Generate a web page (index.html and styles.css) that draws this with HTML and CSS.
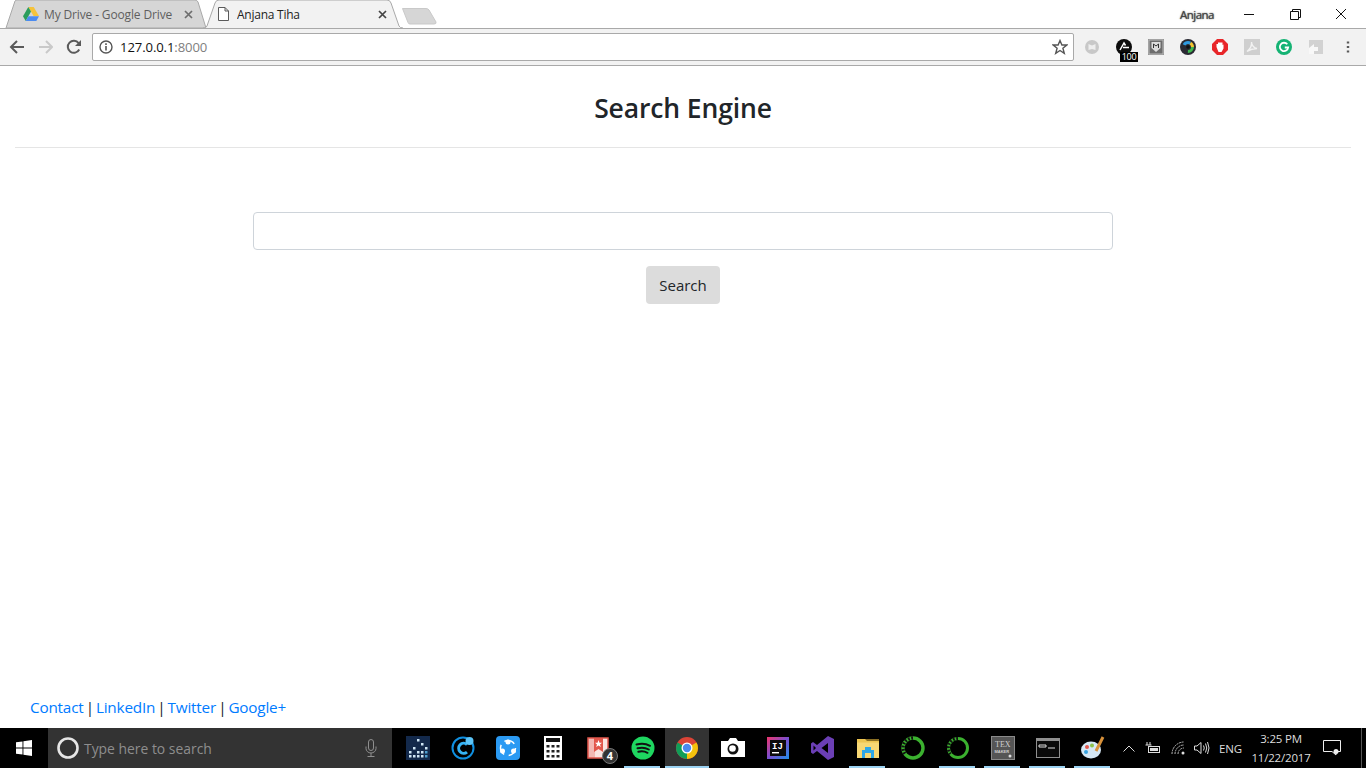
FILE: index.html
```
<!DOCTYPE html>
<html lang="en">
<head>
<meta charset="utf-8">
<title>Anjana Tiha</title>
<link rel="stylesheet" href="styles.css">
</head>
<body>
<header class="browser">
  <div class="tabstrip">
    <div class="tab tab-inactive">
      <svg class="tab-shape" viewBox="0 0 200 28"><path d="M0 28 L9 1 Q9.500 0 11 0 H189 Q191 0 192 2 L200 28Z" fill="#d6d6d6" stroke="#a9a9a9"/></svg>
      <svg class="tab-icon" viewBox="0 0 16 14"><path d="M5.300 0H10.700L16 9H10.600Z" fill="#f5c33b"/><path d="M5.300 0L8 4.600 2.700 14 0 9.300Z" fill="#2a9d5c"/><path d="M5.400 9.300H16L13.300 14H2.700Z" fill="#4b8bf0"/></svg>
      <span class="tab-title tab-title-dim">My Drive - Google Drive</span>
      <svg class="tab-close" viewBox="0 0 9 9"><path d="M1 1L8 8M8 1L1 8" stroke="#6d6d6d" stroke-width="1.700"/></svg>
    </div>
    <div class="tab tab-active">
      <svg class="tab-shape" viewBox="0 0 200 28"><path d="M0 28 H1 Q3 28 4 26 L12 3 Q13 0 16 0 H184 Q187 0 188 3 L196 26 Q197 28 200 28" fill="#f2f2f2" stroke="#a9a9a9"/></svg>
      <svg class="tab-icon tab-icon-doc" viewBox="0 0 11 14"><path d="M.5.500H7L10.500 4V13.500H.5ZM7 .5V4H10.500" fill="#fff" stroke="#5a5a5a"/></svg>
      <span class="tab-title tab-title-tight">Anjana Tiha</span>
      <svg class="tab-close" viewBox="0 0 9 9"><path d="M1 1L8 8M8 1L1 8" stroke="#444" stroke-width="1.700"/></svg>
    </div>
    <svg class="new-tab" viewBox="0 0 36 18"><path d="M1.500 1.500 H25 Q27 1.500 28 3 L35 15 Q35.500 17 33 17 H9 Q7.500 17 7 15.500Z" fill="#d6d6d6" stroke="#c9c9c9"/></svg>
    <span class="user-name">Anjana</span>
    <div class="window-controls">
      <svg class="win-btn" viewBox="0 0 46 28"><path d="M18 14.500H28" stroke="#111"/></svg>
      <svg class="win-btn" viewBox="0 0 46 28"><path d="M18.500 11.500H26.500V19.500H18.500ZM20.500 11.500V9.500H28.500V17.500H26.500" fill="none" stroke="#111"/></svg>
      <svg class="win-btn" viewBox="0 0 46 28"><path d="M18 9L28 19M28 9L18 19" stroke="#111"/></svg>
    </div>
  </div>
  <div class="toolbar">
    <svg class="nav-icon" viewBox="0 0 16 16"><path d="M15 8H2M8 2L2 8L8 14" fill="none" stroke="#5a5a5a" stroke-width="2"/></svg>
    <svg class="nav-icon" viewBox="0 0 16 16"><path d="M2 8H15M9 2L15 8L9 14" fill="none" stroke="#c9c9c9" stroke-width="2"/></svg>
    <svg class="nav-icon" viewBox="0 0 16 16"><path d="M14.200 10.500A6 6 0 1 1 13.600 4.200" fill="none" stroke="#5a5a5a" stroke-width="2"/><path d="M16 1V7H10Z" fill="#5a5a5a"/></svg>
    <div class="omnibox">
      <svg class="info-icon" viewBox="0 0 14 14"><circle cx="7" cy="7" r="6" fill="none" stroke="#555" stroke-width="1.400"/><path d="M7 6V10.500M7 3.200V5" stroke="#555" stroke-width="1.600"/></svg>
      <span class="url">127.0.0.1<span class="url-port">:8000</span></span>
      <svg class="star-icon" viewBox="0 0 16 16"><path d="M8 1.500L9.900 6H14.800L10.900 9.200L12.300 14.300L8 11.500L3.700 14.300L5.100 9.200L1.200 6H6.100Z" fill="none" stroke="#555" stroke-width="1.400"/></svg>
    </div>
    <div class="extensions">
      <span class="ext"><svg viewBox="0 0 16 16"><circle cx="8" cy="8" r="7" fill="#c8c8c8"/><path d="M4.500 5L8 6.500L11.500 5V11L8 10L4.500 11Z" fill="#eee"/></svg></span>
      <span class="ext"><svg viewBox="0 0 16 16"><circle cx="8" cy="8" r="8" fill="#0c0c0c"/><path d="M4 11L8 4L9.500 6.500M7 8.500H13" fill="none" stroke="#fff" stroke-width="1.500"/></svg><span class="ext-badge">100</span></span>
      <span class="ext"><svg viewBox="0 0 16 16"><rect width="16" height="16" fill="#8a8a8a"/><rect x="1" y="1" width="14" height="14" fill="#6d6d6d" stroke="#bbb"/><path d="M3.500 3H12.500V9L8 13L3.500 9Z" fill="#ddd"/><path d="M5.500 9V5L8 7L10.500 5V9" fill="none" stroke="#333"/></svg></span>
      <span class="ext"><svg viewBox="0 0 16 16"><circle cx="8" cy="8" r="8" fill="#2a2a33"/><circle cx="8" cy="8" r="4.500" fill="none" stroke="#3fb950" stroke-width="3" stroke-dasharray="7 30"/><circle cx="8" cy="8" r="4.500" fill="none" stroke="#e53aa8" stroke-width="3" stroke-dasharray="7 30" stroke-dashoffset="7"/><circle cx="8" cy="8" r="4.500" fill="none" stroke="#f2c230" stroke-width="3" stroke-dasharray="7 30" stroke-dashoffset="14"/><circle cx="8" cy="8" r="4.500" fill="none" stroke="#2f9ae0" stroke-width="3" stroke-dasharray="7 30" stroke-dashoffset="21"/><circle cx="8" cy="8" r="1.800" fill="#111"/></svg></span>
      <span class="ext"><svg viewBox="0 0 16 16"><path d="M5 0H11L16 5V11L11 16H5L0 11V5Z" fill="#e8262a"/><path d="M4.500 8V5H6V3.500H10.500V6L11.500 5.500V9.500L9.500 13H6.500Z" fill="#fff"/></svg></span>
      <span class="ext"><svg viewBox="0 0 16 16"><rect width="16" height="16" fill="#cfcfcf"/><path d="M3 12.500C6 10 8 6 7.500 3C7.500 6 10 9 13 9.500C9.500 9.500 6 10.500 3 12.500Z" fill="none" stroke="#f2f2f2" stroke-width="1.400"/></svg></span>
      <span class="ext"><svg viewBox="0 0 16 16"><circle cx="8" cy="8" r="8" fill="#15b374"/><path d="M11.300 5.300A4.200 4.200 0 1 0 12.200 8.500H8.800" fill="none" stroke="#fff" stroke-width="1.800"/></svg></span>
      <span class="ext"><svg viewBox="0 0 16 16"><path d="M1 1H15V15H1Z" fill="#d2d2d2"/><path d="M1 9L6 5V8H10V12H6V15H1Z" fill="#f8f8f8"/></svg></span>
      <span class="ext"><svg viewBox="0 0 16 16"><path d="M8 2.500V4.500M8 7V9M8 11.500V13.500" stroke="#5a5a5a" stroke-width="2.400"/></svg></span>
    </div>
  </div>
</header>

<main class="page">
  <h1 class="title">Search Engine</h1>
  <hr class="rule">
  <form class="search-form">
    <input class="search-input" type="text" aria-label="Search">
    <button class="search-button" type="button">Search</button>
  </form>
  <footer class="footer">
    <a href="#">Contact</a> | <a href="#">LinkedIn</a> | <a href="#">Twitter</a> | <a href="#">Google+</a>
  </footer>
</main>

<nav class="taskbar">
  <span class="start"><svg viewBox="0 0 16 16"><path d="M0 2.300L6.500 1.400V7.500H0ZM7.400 1.300L16 0V7.500H7.400ZM0 8.500H6.500V14.600L0 13.700ZM7.400 8.500H16V16L7.400 14.700Z" fill="#fff"/></svg></span>
  <div class="cortana">
    <svg class="cortana-ring" viewBox="0 0 22 22"><circle cx="11" cy="11" r="9.500" fill="none" stroke="#e6e6e6" stroke-width="2.600"/></svg>
    <span class="cortana-text">Type here to search</span>
    <svg class="mic" viewBox="0 0 12 18"><rect x="3.500" y=".5" width="5" height="11" rx="2.500" fill="none" stroke="#8f8f8f"/><path d="M1 7.500V9.500A5 4.500 0 0 0 11 9.500V7.500M6 14V17M2.500 17.500H9.500" fill="none" stroke="#8f8f8f"/></svg>
  </div>
  <div class="apps">
    <span class="app"><svg viewBox="0 0 24 24"><rect width="24" height="24" fill="#13294b"/><g fill="#cfe6f5"><rect x="11" y="3" width="2.500" height="2.500"/><rect x="15" y="7" width="2.500" height="2.500"/><rect x="7" y="11" width="2.500" height="2.500"/><rect x="19" y="11" width="2.500" height="2.500"/><rect x="3" y="15" width="2.500" height="2.500"/><rect x="11" y="15" width="2.500" height="2.500"/><rect x="15" y="15" width="2.500" height="2.500"/><rect x="3" y="19" width="2.500" height="2.500"/><rect x="7" y="19" width="2.500" height="2.500"/><rect x="11" y="19" width="2.500" height="2.500"/><rect x="15" y="19" width="2.500" height="2.500"/></g><rect x="19" y="19" width="2.500" height="2.500" fill="#4f9fd0"/><rect x="19" y="15" width="2.500" height="2.500" fill="#4f9fd0"/></svg></span>
    <span class="app"><svg viewBox="0 0 24 24"><circle cx="12" cy="12" r="10.500" fill="none" stroke="#0f8fe0" stroke-width="2"/><path d="M16 8.500A5 5 0 1 0 16 16" fill="none" stroke="#35b3f5" stroke-width="3"/><circle cx="18.500" cy="5" r="4" fill="#5cc4f7"/></svg></span>
    <span class="app"><svg viewBox="0 0 24 24"><rect width="24" height="24" rx="4" fill="#2b9af3"/><circle cx="12" cy="12" r="7.500" fill="none" stroke="#fff" stroke-width="1.500" stroke-dasharray="11 4.700"/><circle cx="12" cy="6" r="2.500" fill="#fff"/><circle cx="6.500" cy="15" r="2.500" fill="#fff"/><circle cx="17.500" cy="15" r="2.500" fill="#fff"/></svg></span>
    <span class="app"><svg viewBox="0 0 24 24"><rect x="3" width="18" height="24" fill="#fff"/><rect x="5" y="2" width="14" height="4" fill="#111"/><g fill="#222"><rect x="5.500" y="9" width="3" height="2.500"/><rect x="10.500" y="9" width="3" height="2.500"/><rect x="15.500" y="9" width="3" height="2.500"/><rect x="5.500" y="14" width="3" height="2.500"/><rect x="10.500" y="14" width="3" height="2.500"/><rect x="15.500" y="14" width="3" height="2.500"/><rect x="5.500" y="19" width="3" height="2.500"/><rect x="10.500" y="19" width="3" height="2.500"/><rect x="15.500" y="19" width="3" height="2.500"/></g></svg></span>
    <span class="app"><svg viewBox="0 0 24 24"><rect x="2" y="2" width="20" height="20" fill="#fbe4e1" stroke="#e2574c" stroke-width="1.500"/><rect x="2" y="2" width="7" height="20" fill="#e2574c" opacity=".3"/><path d="M8 2H17V16L12.500 13L8 16Z" fill="#e2574c"/><path d="M12.500 4L13.500 6.700H16L14 8.400L14.800 11L12.500 9.500L10.200 11L11 8.400L9 6.700H11.500Z" fill="#fff"/></svg><span class="app-count">4</span></span>
    <span class="app app-open"><svg viewBox="0 0 24 24"><circle cx="12" cy="12" r="11.500" fill="#1ed760"/><path d="M5.500 8.500C10 7.200 15 7.500 19 9.800M6.500 12.300C10.500 11.300 14.500 11.600 17.800 13.500M7.300 15.800C10.500 15 13.800 15.300 16.500 16.800" fill="none" stroke="#111" stroke-width="2" stroke-linecap="round"/></svg></span>
    <span class="app app-open app-active"><svg viewBox="0 0 24 24"><circle cx="12" cy="12" r="11" fill="#db4437"/><path d="M12 12L21.500 6.500A11 11 0 0 1 12 23Z" fill="#f4c20d"/><path d="M12 12L12 23A11 11 0 0 1 2.500 6.500Z" fill="#0f9d58"/><circle cx="12" cy="12" r="5.500" fill="#fff"/><circle cx="12" cy="12" r="4.200" fill="#4a8af0"/></svg></span>
    <span class="app"><svg viewBox="0 0 24 24"><path d="M0 5H7L9 2H15L17 5H24V21H0Z" fill="#fff"/><circle cx="12" cy="13" r="5.500" fill="#111"/><circle cx="11.500" cy="12.500" r="3.300" fill="#fff"/></svg></span>
    <span class="app"><svg viewBox="0 0 24 24"><defs><linearGradient id="ij" x1="0" y1="0" x2="1" y2="1"><stop offset="0" stop-color="#f0356b"/><stop offset=".5" stop-color="#7a4fd0"/><stop offset="1" stop-color="#1f8fe8"/></linearGradient></defs><rect width="22" height="22" x="1" y="1" fill="url(#ij)"/><rect x="4" y="4" width="16" height="16" fill="#0b0b0b"/><text class="ij-text" x="6" y="13">IJ</text><rect x="6" y="16" width="7" height="1.400" fill="#fff"/></svg></span>
    <span class="app"><svg viewBox="0 0 24 24"><path d="M17 0L23 3V21L17 24L6 15L2 18L0 16.500V7.500L2 6L6 9Z" fill="#6b3fb5"/><path d="M17 7L10.500 12L17 17Z" fill="#000"/><path d="M2.500 9.500V14.500L5 12Z" fill="#000"/></svg></span>
    <span class="app app-open"><svg viewBox="0 0 24 24"><path d="M1 3H9L11 5H23V22H1Z" fill="#f7d774"/><rect x="1" y="3" width="22" height="3.500" fill="#e8b93a" opacity=".6"/><path d="M6 22V14H9V11H15V14H18V22H15V17H9V22Z" fill="#2ea7e8"/></svg></span>
    <span class="app"><svg viewBox="0 0 24 24"><circle cx="12" cy="12" r="10" fill="none" stroke="#3bb12f" stroke-width="3.400"/><path d="M12 2A10 10 0 0 0 4 18" fill="none" stroke="#111" stroke-width="3.400" stroke-dasharray="1.800 1.500"/></svg></span>
    <span class="app app-open"><svg viewBox="0 0 24 24"><circle cx="12" cy="12" r="9.500" fill="none" stroke="#3bb12f" stroke-width="3"/><path d="M12 2.500A9.500 9.500 0 0 0 4.500 18" fill="none" stroke="#111" stroke-width="3" stroke-dasharray="1.800 1.500"/></svg></span>
    <span class="app app-open"><svg viewBox="0 0 24 24"><rect x=".5" y=".5" width="23" height="23" fill="#555" stroke="#8a8a8a"/><text class="tex-big" x="4" y="11">TEX</text><text class="tex-small" x="3.500" y="17">MAKER</text><circle cx="19" cy="20" r="1.500" fill="#ddd"/></svg></span>
    <span class="app app-open"><svg viewBox="0 0 24 24"><rect x=".5" y="2.500" width="23" height="19" fill="#0a0a0a" stroke="#8f8f8f"/><rect x="1" y="3" width="22" height="2" fill="#8f8f8f"/><path d="M3 9H10V11H3ZM12 12H19" stroke="#ddd" fill="none"/></svg></span>
    <span class="app app-open"><svg viewBox="0 0 24 24"><ellipse cx="10" cy="14" rx="10" ry="8.500" fill="#d6e8f5"/><circle cx="6" cy="11" r="2" fill="#e2574c"/><circle cx="11" cy="9.500" r="2" fill="#8cc24a"/><circle cx="5" cy="16" r="2" fill="#38a3e0"/><path d="M15 15L22 1" stroke="#d8913a" stroke-width="3"/></svg></span>
  </div>
  <div class="tray">
    <svg class="tray-chevron" viewBox="0 0 12 7"><path d="M.5 6.500L6 1L11.500 6.500" fill="none" stroke="#ddd"/></svg>
    <svg class="tray-battery" viewBox="0 0 16 12"><path d="M2 0V3M5 0V3M.5 3H6.500" stroke="#ddd"/><rect x="3.500" y="4.500" width="11" height="6" fill="none" stroke="#ddd"/><rect x="5" y="6" width="8" height="3" fill="#ddd"/></svg>
    <svg class="tray-wifi" viewBox="0 0 14 14"><path d="M1 13A12 12 0 0 1 13 1M4 13A9 9 0 0 1 13 4M7 13A6 6 0 0 1 13 7" fill="none" stroke="#bbb" stroke-dasharray="2 .7"/><circle cx="12" cy="12" r="1.500" fill="#ddd"/></svg>
    <svg class="tray-speaker" viewBox="0 0 16 14"><path d="M.5 5H3L7 1.500V12.500L3 9H.5Z" fill="none" stroke="#ddd"/><path d="M9.500 4.500Q11 7 9.500 9.500M11.500 2.500Q14 7 11.500 11.500M13.500 1Q16.500 7 13.500 13" fill="none" stroke="#ddd"/></svg>
    <span class="tray-lang">ENG</span>
    <span class="clock"><span>3:25 PM</span><span>11/22/2017</span></span>
    <svg class="tray-notify" viewBox="0 0 18 16"><path d="M.5.500H17.500V11.500H13V15L9 11.500H.5Z" fill="none" stroke="#eee"/><circle cx="13" cy="11.500" r="2.500" fill="#eee"/></svg>
    <span class="desktop-peek"></span>
  </div>
</nav>
</body>
</html>
```

FILE: styles.css
```
* { box-sizing: border-box; }

html, body { height: 100%; }

body {
  margin: 0;
  height: 768px;
  overflow: hidden;
  display: flex;
  flex-direction: column;
  background: #fff;
  font-family: "Open Sans", "Noto Sans", sans-serif;
  color: #212529;
}

/* Browser chrome */
.browser { flex: none; }

.tabstrip {
  height: 28px;
  display: flex;
  align-items: flex-start;
  padding-left: 6px;
  background: #fff;
}

.tab {
  position: relative;
  width: 200px;
  height: 29px;
  flex: none;
  display: flex;
  align-items: center;
  font-size: 12px;
  z-index: 1;
}

.tab-inactive { padding: 0 13px 1px 17px; }
.tab-active { margin-left: -3px; padding: 0 16px 1px 15px; z-index: 2; }

.tab-shape {
  position: absolute;
  left: 0;
  top: 0;
  width: 200px;
  height: 28px;
  overflow: visible;
}

.tab-icon { position: relative; width: 16px; height: 14px; flex: none; margin-right: 5px; }
.tab-icon-doc { width: 11px; margin-right: 8px; }

.tab-title {
  position: relative;
  flex: 1;
  white-space: nowrap;
  overflow: hidden;
  color: #222;
  letter-spacing: -.1px;
}

.tab-title-dim { color: #5f5f5f; letter-spacing: -.14px; }
.tab-title-tight { letter-spacing: -.25px; }
.tab-close { position: relative; width: 9px; height: 9px; flex: none; }

.new-tab { width: 36px; height: 18px; flex: none; margin: 7px 0 0 -2px; }

.user-name {
  margin: 6px 12px 0 auto;
  font-size: 11.500px;
  line-height: 18px;
  color: #444;
  letter-spacing: -.5px;
  text-shadow: 0 0 1px #555, 0 0 2px #aaa;
}

.window-controls { display: flex; margin-right: 2px; }
.win-btn { width: 46px; height: 28px; flex: none; }

.toolbar {
  height: 38px;
  display: flex;
  align-items: center;
  padding-left: 9px;
  background: #f2f2f2;
  border-top: 1px solid #a9a9a9;
  border-bottom: 1px solid #a9a9a9;
}

.nav-icon { width: 16px; height: 16px; flex: none; margin-right: 12px; }

.omnibox {
  width: 982px;
  height: 28px;
  flex: none;
  margin-left: -1px;
  display: flex;
  align-items: center;
  padding: 0 5px 0 6px;
  background: #fff;
  border: 1px solid #a9a9a9;
  border-radius: 2px;
}

.info-icon { width: 14px; height: 14px; flex: none; margin-right: 7px; }
.url { flex: 1; font-size: 13.100px; color: #111; letter-spacing: -.1px; }
.url-port { color: #808080; }
.star-icon { width: 16px; height: 16px; flex: none; }

.extensions { display: flex; margin-left: 2px; }

.ext {
  position: relative;
  width: 32px;
  height: 28px;
  display: flex;
  align-items: center;
  justify-content: center;
}

.ext svg { width: 16px; height: 16px; }

.ext-badge {
  position: absolute;
  left: 12px;
  top: 19px;
  width: 18px;
  height: 10px;
  background: #000;
  color: #fff;
  font-size: 9px;
  line-height: 10px;
  text-align: center;
  letter-spacing: -.3px;
}

/* Page */
.page {
  flex: 1;
  min-height: 0;
  display: flex;
  flex-direction: column;
  align-items: center;
  padding: 0 15px;
}

.title {
  margin: 22px 0 0;
  font-size: 26.500px;
  line-height: 40px;
  font-weight: 600;
  letter-spacing: -.13px;
  color: #212529;
}

.rule {
  width: 100%;
  margin: 19px 0 0;
  border: 0;
  border-top: 1px solid #e5e5e5;
}

.search-form {
  display: flex;
  flex-direction: column;
  align-items: center;
  gap: 16px;
  margin-top: 64px;
}

.search-input {
  width: 860px;
  height: 38px;
  padding: 6px 12px;
  background: #fff;
  border: 1px solid #ced4da;
  border-radius: 4px;
}

.search-button {
  width: 74px;
  height: 38px;
  padding: 0;
  font: 15px/1 "Open Sans", "Noto Sans", sans-serif;
  color: #212529;
  background: #dcdcdc;
  border: 0;
  border-radius: 4px;
}

.footer {
  align-self: flex-start;
  margin: auto 0 9px 15px;
  font-size: 15.300px;
  line-height: 24px;
  letter-spacing: -.2px;
  word-spacing: -1.700px;
  color: #212529;
}

.footer a { color: #007bff; text-decoration: none; }

/* Taskbar */
.taskbar {
  flex: none;
  height: 40px;
  display: flex;
  background: #000;
  color: #ddd;
}

.start {
  width: 48px;
  display: flex;
  align-items: center;
  justify-content: center;
}

.start svg { width: 16px; height: 16px; }

.cortana {
  width: 344px;
  display: flex;
  align-items: center;
  padding: 0 15px 0 9px;
  background: #333;
}

.cortana-ring { width: 22px; height: 22px; flex: none; margin-right: 5px; }

.cortana-text {
  flex: 1;
  font-size: 13.900px;
  color: #8e8e8e;
}

.mic { width: 12px; height: 18px; flex: none; }

.apps { display: flex; margin-left: 3px; }

.app {
  position: relative;
  width: 45px;
  height: 40px;
  display: flex;
  align-items: center;
  justify-content: center;
}

.app svg { width: 24px; height: 24px; }

.app-open::after {
  content: "";
  position: absolute;
  left: 4px;
  right: 5px;
  bottom: 0;
  height: 2px;
  background: #9bd2f2;
}

.app-active { background: #333; border-right: 1px solid #000; }
.app-active::after { left: 0; right: 0; }

.app-count {
  position: absolute;
  left: 27px;
  top: 20px;
  width: 16px;
  height: 16px;
  border-radius: 50%;
  background: #333;
  border: 1px solid #777;
  color: #fff;
  font-size: 11px;
  font-weight: 700;
  line-height: 14px;
  text-align: center;
}

.ij-text { font: 700 9px "Liberation Mono", monospace; fill: #fff; }
.tex-big { font: 8px "Liberation Serif", serif; fill: #cfcfcf; }
.tex-small { font: 700 4px "Liberation Sans", sans-serif; fill: #cfcfcf; }

.tray {
  flex: 1;
  display: flex;
  align-items: center;
  padding-left: 8px;
}

.tray-chevron { width: 12px; height: 7px; flex: none; margin-right: 10px; }
.tray-battery { width: 16px; height: 12px; flex: none; margin-right: 10px; }
.tray-wifi { width: 14px; height: 14px; flex: none; margin-right: 9px; }
.tray-speaker { width: 16px; height: 14px; flex: none; margin-right: 9px; }

.tray-lang { font-size: 11.500px; width: 24px; flex: none; letter-spacing: -.2px; }

.clock {
  width: 66px;
  margin-left: 5px;
  display: flex;
  flex-direction: column;
  align-items: center;
  font-size: 11.500px;
  line-height: 19px;
  letter-spacing: -.2px;
}

.tray-notify { width: 18px; height: 16px; flex: none; margin-left: 9px; }

.desktop-peek {
  width: 1px;
  height: 40px;
  margin-left: 20px;
  background: #555;
}
```
